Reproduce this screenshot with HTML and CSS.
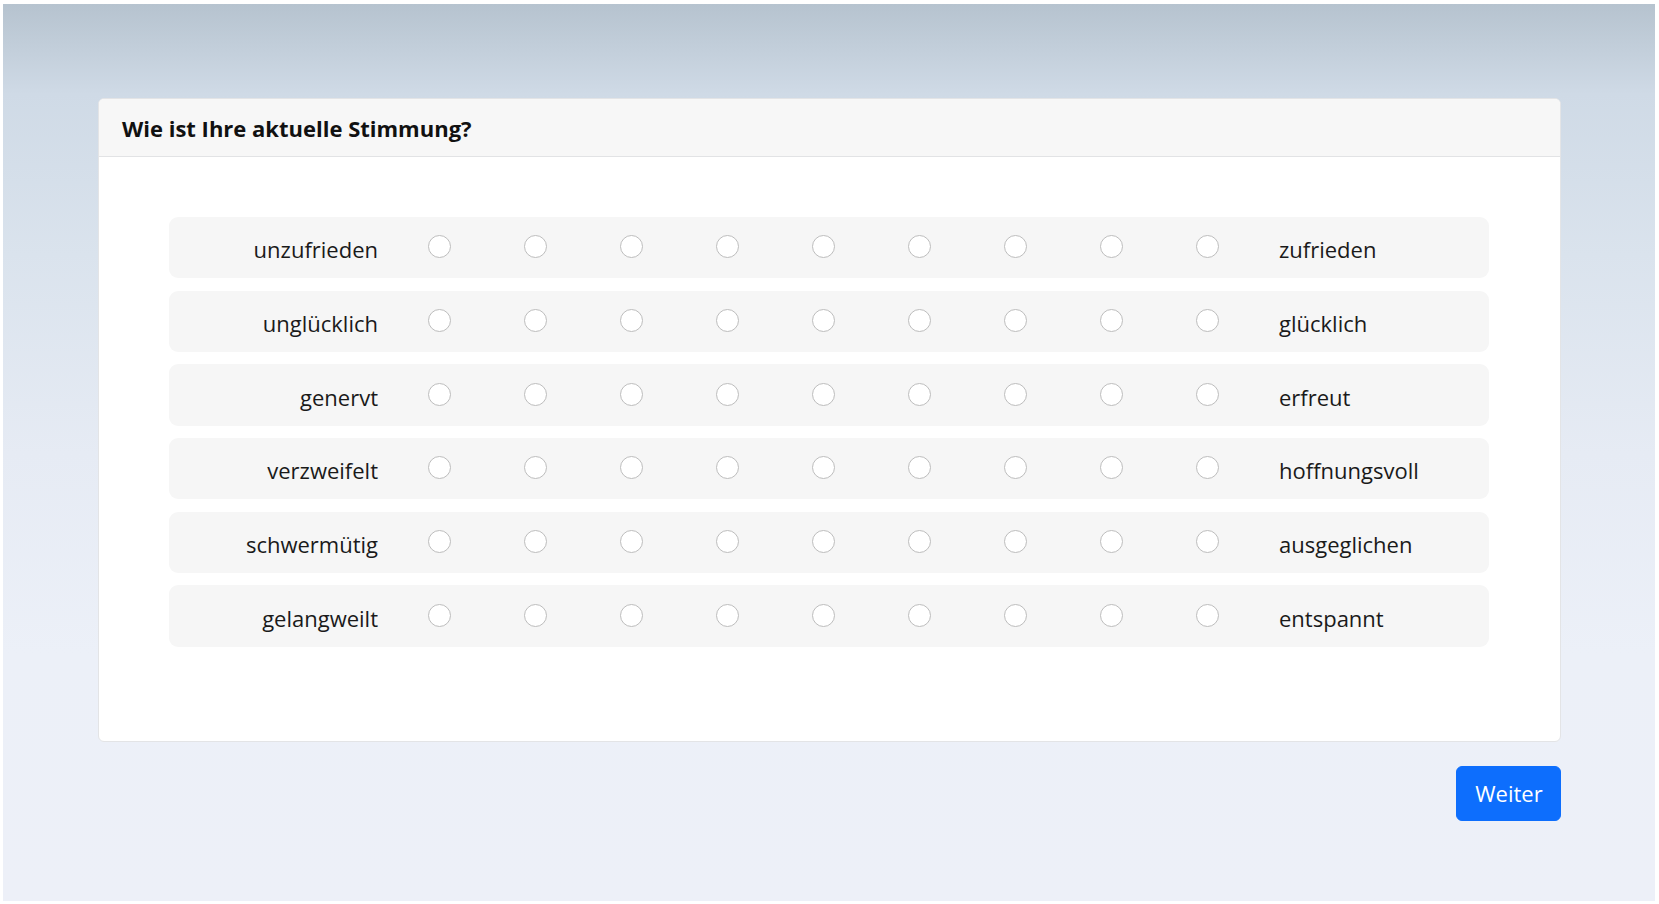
FILE: index.html
```html
<!DOCTYPE html>
<html lang="de">
<head>
<meta charset="utf-8">
<title>Stimmung</title>
<link rel="stylesheet" href="styles.css">
</head>
<body>
<div class="frame">
  <div class="container">
    <div class="card">
      <div class="card-header">Wie ist Ihre aktuelle Stimmung?</div>
      <div class="card-body">
        <div class="scale">
          <div class="row">
            <span class="label-left">unzufrieden</span>
            <input type="radio" name="r1"><input type="radio" name="r1"><input type="radio" name="r1"><input type="radio" name="r1"><input type="radio" name="r1"><input type="radio" name="r1"><input type="radio" name="r1"><input type="radio" name="r1"><input type="radio" name="r1">
            <span class="label-right">zufrieden</span>
          </div>
          <div class="row">
            <span class="label-left">unglücklich</span>
            <input type="radio" name="r2"><input type="radio" name="r2"><input type="radio" name="r2"><input type="radio" name="r2"><input type="radio" name="r2"><input type="radio" name="r2"><input type="radio" name="r2"><input type="radio" name="r2"><input type="radio" name="r2">
            <span class="label-right">glücklich</span>
          </div>
          <div class="row">
            <span class="label-left">genervt</span>
            <input type="radio" name="r3"><input type="radio" name="r3"><input type="radio" name="r3"><input type="radio" name="r3"><input type="radio" name="r3"><input type="radio" name="r3"><input type="radio" name="r3"><input type="radio" name="r3"><input type="radio" name="r3">
            <span class="label-right">erfreut</span>
          </div>
          <div class="row">
            <span class="label-left">verzweifelt</span>
            <input type="radio" name="r4"><input type="radio" name="r4"><input type="radio" name="r4"><input type="radio" name="r4"><input type="radio" name="r4"><input type="radio" name="r4"><input type="radio" name="r4"><input type="radio" name="r4"><input type="radio" name="r4">
            <span class="label-right">hoffnungsvoll</span>
          </div>
          <div class="row">
            <span class="label-left">schwermütig</span>
            <input type="radio" name="r5"><input type="radio" name="r5"><input type="radio" name="r5"><input type="radio" name="r5"><input type="radio" name="r5"><input type="radio" name="r5"><input type="radio" name="r5"><input type="radio" name="r5"><input type="radio" name="r5">
            <span class="label-right">ausgeglichen</span>
          </div>
          <div class="row">
            <span class="label-left">gelangweilt</span>
            <input type="radio" name="r6"><input type="radio" name="r6"><input type="radio" name="r6"><input type="radio" name="r6"><input type="radio" name="r6"><input type="radio" name="r6"><input type="radio" name="r6"><input type="radio" name="r6"><input type="radio" name="r6">
            <span class="label-right">entspannt</span>
          </div>
        </div>
      </div>
    </div>
    <div class="actions">
      <button class="btn" type="button">Weiter</button>
    </div>
  </div>
</div>
</body>
</html>
```

FILE: styles.css
```css
html, body {
  margin: 0;
  padding: 0;
  background: #ffffff;
}

body {
  font-family: "Open Sans", "Noto Sans", sans-serif;
  color: #212529;
}

.frame {
  margin: 4px 4px 3px 3px;
  height: 897px;
  background: linear-gradient(to bottom, #b6c3cf 0px, #cfdae6 90px, #dae3ed 250px, #e6ebf4 450px, #ecf0f8 650px, #edf0f8 897px);
  box-sizing: border-box;
  padding: 94px 94px 0 95px;
}

.container {
  display: flex;
  flex-direction: column;
}

.card {
  background: #ffffff;
  border: 1px solid #e3e4e6;
  border-radius: 6px;
  overflow: hidden;
}

.card-header {
  background: #f7f7f7;
  border-bottom: 1px solid #e2e3e5;
  height: 58px;
  box-sizing: border-box;
  padding: 1px 23px 0;
  display: flex;
  align-items: center;
  font-weight: 700;
  font-size: 22px;
  color: #111;
}

.card-body {
  padding: 60px 71px 94px 70px;
}

.scale {
  display: flex;
  flex-direction: column;
  gap: 12.4px;
}

.row {
  display: grid;
  grid-template-columns: 222px repeat(9, 96px) 1fr;
  align-items: center;
  height: 61.3px;
  background: #f6f6f6;
  border-radius: 9px;
  font-size: 22px;
  color: #1a1a1a;
}

.label-left {
  text-align: right;
  padding-right: 13px;
  padding-top: 3px;
}

.label-right {
  padding-left: 24px;
  padding-top: 3px;
}

.row input[type="radio"] {
  appearance: none;
  -webkit-appearance: none;
  justify-self: center;
  width: 23px;
  height: 23px;
  margin: 0 0 2px 0;
  border: 1px solid #bdbdbd;
  border-radius: 50%;
  background: #ffffff;
  box-sizing: border-box;
}

.actions {
  display: flex;
  justify-content: flex-end;
  margin-top: 24px;
}

.btn {
  width: 105px;
  height: 55px;
  background: #0d6efd;
  color: #ffffff;
  border: 1px solid #0d6efd;
  border-radius: 6px;
  font-family: "Open Sans", "Noto Sans", sans-serif;
  font-size: 22px;
  padding: 0 0 0 1px;
}
```
